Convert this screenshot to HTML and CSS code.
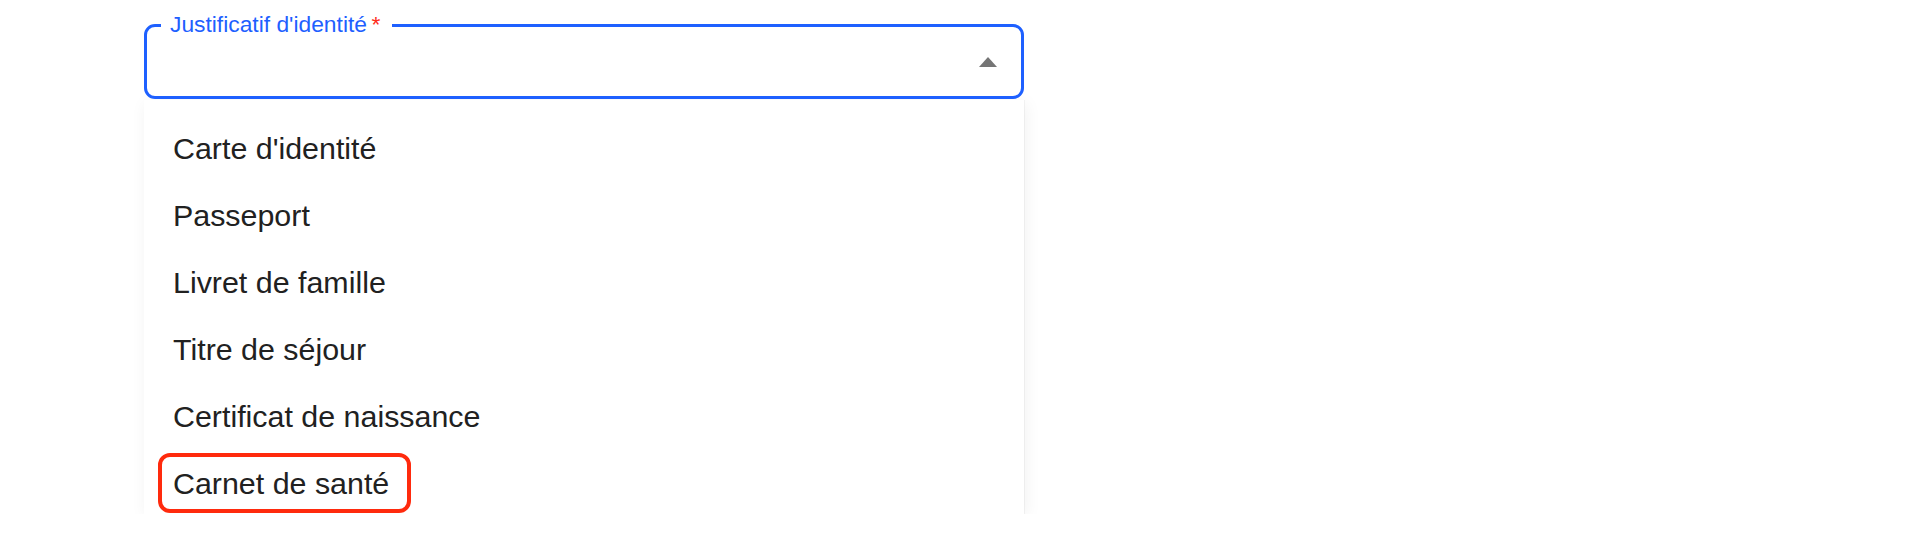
FILE: index.html
```html
<!DOCTYPE html>
<html lang="fr">
<head>
  <meta charset="UTF-8" />
  <meta name="viewport" content="width=device-width,initial-scale=1.0" />
  <title>Justificatif d'identité</title>
  <link rel="stylesheet" href="styles.css">
</head>
<body>
  <div id="formWrapper">
    <div class="field">
      <span class="field-label">Justificatif d'identité<span class="required">&thinsp;*</span></span>
      <svg class="arrow" width="18" height="10" viewBox="0 0 18 10">
        <polygon points="0,10 9,0 18,10" fill="#757575" />
      </svg>
    </div>

    <ul class="menu">
      <li>Carte d'identité</li>
      <li>Passeport</li>
      <li>Livret de famille</li>
      <li>Titre de séjour</li>
      <li>Certificat de naissance</li>
      <li><span class="highlight">Carnet de santé</span></li>
    </ul>
  </div>
</body>
</html>
```

FILE: styles.css
```css
body {
  margin: 0;
  background: #fff;
  font-family: "Liberation Sans", Arial, Helvetica, sans-serif;
  color: #212121;
}

#formWrapper {
  width: 880px;
  padding: 24px 0 0 144px;
}

.field {
  position: relative;
  height: 75px;
  box-sizing: border-box;
  border: 3px solid #1e60ff;
  border-radius: 11px;
  background: #fff;
  display: flex;
  align-items: center;
  justify-content: flex-end;
  padding-right: 24px;
}

.field-label {
  position: absolute;
  left: 14px;
  top: -16px;
  padding: 0 12px 0 9px;
  background: #fff;
  color: #1e60ff;
  font-size: 22.8px;
  line-height: 26px;
}

.required {
  color: #ff2d1a;
}

.arrow {
  display: block;
}

.menu {
  list-style: none;
  margin: 1px 0 0;
  padding: 15px 0 0;
  height: 414px;
  box-sizing: border-box;
  overflow: hidden;
  background: #fff;
  box-shadow: 2px 3px 16px rgba(0, 0, 0, 0.06), 1px 0 0 rgba(0, 0, 0, 0.04);
}

.menu li {
  height: 67px;
  line-height: 67px;
  padding-left: 29px;
  font-size: 30.4px;
}

.highlight {
  position: relative;
}

.highlight::after {
  content: "";
  position: absolute;
  left: -15px;
  right: -22px;
  top: -13px;
  bottom: -13px;
  border: 4px solid #ff2a0d;
  border-radius: 12px;
}
```
